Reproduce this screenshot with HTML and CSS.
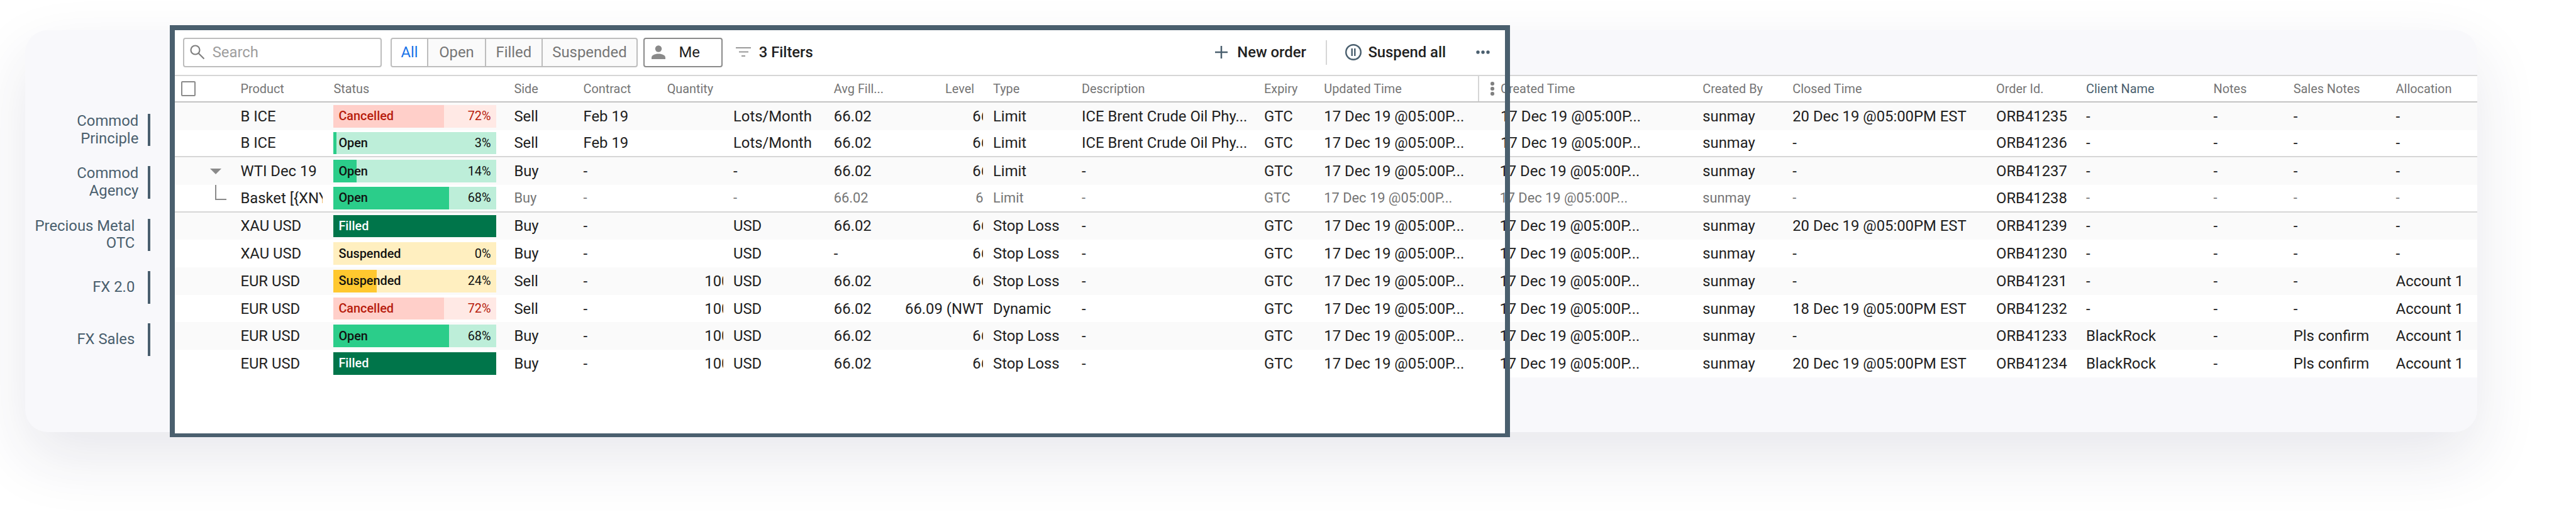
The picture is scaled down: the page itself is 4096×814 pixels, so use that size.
FILE: index.html
```html
<!DOCTYPE html>
<html lang="en">
  <head>
    <meta charset="UTF-8" />
    <meta name="viewport" content="width=device-width, initial-scale=1.0" />
    <title>Orders</title>
    <link rel="stylesheet" href="styles.css">
  </head>
  <body>
    <div class="card">
      <div class="focus-fill"></div>

      <!-- Desk list on the left -->
      <div class="desks">
        <div class="desk desk-wide">Commod<br>Principle</div>
        <div class="desk desk-wide">Commod<br>Agency</div>
        <div class="desk">Precious Metal<br>OTC</div>
        <div class="desk">FX 2.0</div>
        <div class="desk">FX Sales</div>
      </div>

      <div class="main">
        <!-- Toolbar -->
        <div class="toolbar">
          <div class="search">
            <svg class="search-icon" viewBox="0 0 24 24"><circle cx="8.500" cy="8.500" r="7"/><path d="M13.500 13.500l9 9"/></svg>
            <span>Search</span>
          </div>
          <div class="segments">
            <span class="seg seg-all">All</span>
            <span class="seg seg-open">Open</span>
            <span class="seg seg-filled">Filled</span>
            <span class="seg seg-susp">Suspended</span>
          </div>
          <div class="me">
            <svg class="me-icon" viewBox="0 0 24 24"><circle cx="12" cy="6.500" r="5.200"/><path d="M1 23v-2.500c0-3.500 5-6 11-6s11 2.500 11 6v2.500z"/></svg>
            <span>Me</span>
          </div>
          <div class="filters">
            <svg class="filter-icon" viewBox="0 0 24 24"><path d="M0 5h24M5 11.500h15M9 18h6"/></svg>
            <span>3 Filters</span>
          </div>
          <div class="actions">
            <svg class="plus-icon" viewBox="0 0 20 20"><path d="M10 0v20M0 10h20"/></svg>
            <span class="new-order">New order</span>
            <span class="divider"></span>
            <svg class="pause-icon" viewBox="0 0 26 26"><circle cx="13" cy="13" r="11.800"/><path d="M10.700 7v12M15.300 7v12"/></svg>
            <span class="suspend">Suspend all</span>
            <svg class="more-icon" viewBox="0 0 22 6"><circle cx="3" cy="3" r="2.700"/><circle cx="11" cy="3" r="2.700"/><circle cx="19" cy="3" r="2.700"/></svg>
          </div>
        </div>

        <!-- Table -->
        <div class="row head">
          <div class="sel"><span class="check"></span></div>
          <div>Product</div><div>Status</div><div>Side</div><div>Contract</div><div>Quantity</div><div></div><div>Avg Fill...</div>
          <div class="level-head">Level</div><div>Type</div><div>Description</div><div>Expiry</div>
          <div class="updated-head">Updated Time<span class="col-menu"><i></i><i></i><i></i></span></div>
          <div class="created">Created Time</div><div>Created By</div><div>Closed Time</div><div>Order Id.</div><div class="sorted">Client Name</div><div>Notes</div><div>Sales Notes</div><div>Allocation</div>
        </div>

        <div class="row">
          <div class="sel"></div><div>B ICE</div>
          <div class="bar cancelled"><b style="width:68%"></b><span>Cancelled</span><em>72%</em></div>
          <div>Sell</div><div>Feb 19</div><div class="qty"></div><div>Lots/Month</div><div>66.02</div><div class="level">66.02</div><div>Limit</div><div>ICE Brent Crude Oil Phy...</div><div>GTC</div><div>17 Dec 19 @05:00P...</div><div class="created">17 Dec 19 @05:00P...</div><div>sunmay</div><div>20 Dec 19 @05:00PM EST</div><div>ORB41235</div><div>-</div><div>-</div><div>-</div><div>-</div>
        </div>
        <div class="row sep">
          <div class="sel"></div><div>B ICE</div>
          <div class="bar open"><b style="width:1.6%"></b><span>Open</span><em>3%</em></div>
          <div>Sell</div><div>Feb 19</div><div class="qty"></div><div>Lots/Month</div><div>66.02</div><div class="level">66.02</div><div>Limit</div><div>ICE Brent Crude Oil Phy...</div><div>GTC</div><div>17 Dec 19 @05:00P...</div><div class="created">17 Dec 19 @05:00P...</div><div>sunmay</div><div>-</div><div>ORB41236</div><div>-</div><div>-</div><div>-</div><div>-</div>
        </div>
        <div class="row">
          <div class="sel"><span class="caret"></span></div><div>WTI Dec 19</div>
          <div class="bar open"><b style="width:14%"></b><span>Open</span><em>14%</em></div>
          <div>Buy</div><div>-</div><div class="qty"></div><div>-</div><div>66.02</div><div class="level">66.02</div><div>Limit</div><div>-</div><div>GTC</div><div>17 Dec 19 @05:00P...</div><div>17 Dec 19 @05:00P...</div><div>sunmay</div><div>-</div><div>ORB41237</div><div>-</div><div>-</div><div>-</div><div>-</div>
        </div>
        <div class="row child sep">
          <div class="sel"><span class="branch"></span></div><div class="keep clip">Basket [{XNYM...</div>
          <div class="bar open"><b style="width:71%"></b><span>Open</span><em>68%</em></div>
          <div>Buy</div><div>-</div><div class="qty"></div><div>-</div><div>66.02</div><div class="level">66.02</div><div>Limit</div><div>-</div><div>GTC</div><div>17 Dec 19 @05:00P...</div><div>17 Dec 19 @05:00P...</div><div>sunmay</div><div>-</div><div class="keep">ORB41238</div><div>-</div><div>-</div><div>-</div><div>-</div>
        </div>
        <div class="row">
          <div class="sel"></div><div>XAU USD</div>
          <div class="bar filled"><span>Filled</span></div>
          <div>Buy</div><div>-</div><div class="qty"></div><div>USD</div><div>66.02</div><div class="level">66.02</div><div>Stop Loss</div><div>-</div><div>GTC</div><div>17 Dec 19 @05:00P...</div><div>17 Dec 19 @05:00P...</div><div>sunmay</div><div>20 Dec 19 @05:00PM EST</div><div>ORB41239</div><div>-</div><div>-</div><div>-</div><div>-</div>
        </div>
        <div class="row">
          <div class="sel"></div><div>XAU USD</div>
          <div class="bar suspended"><span>Suspended</span><em>0%</em></div>
          <div>Buy</div><div>-</div><div class="qty"></div><div>USD</div><div>-</div><div class="level">66.02</div><div>Stop Loss</div><div>-</div><div>GTC</div><div>17 Dec 19 @05:00P...</div><div>17 Dec 19 @05:00P...</div><div>sunmay</div><div>-</div><div>ORB41230</div><div>-</div><div>-</div><div>-</div><div>-</div>
        </div>
        <div class="row">
          <div class="sel"></div><div>EUR USD</div>
          <div class="bar suspended"><b style="width:26.7%"></b><span>Suspended</span><em>24%</em></div>
          <div>Sell</div><div>-</div><div class="qty">1000</div><div>USD</div><div>66.02</div><div class="level">66.02</div><div>Stop Loss</div><div>-</div><div>GTC</div><div>17 Dec 19 @05:00P...</div><div>17 Dec 19 @05:00P...</div><div>sunmay</div><div>-</div><div>ORB41231</div><div>-</div><div>-</div><div>-</div><div>Account 1</div>
        </div>
        <div class="row">
          <div class="sel"></div><div>EUR USD</div>
          <div class="bar cancelled"><b style="width:68%"></b><span>Cancelled</span><em>72%</em></div>
          <div>Sell</div><div>-</div><div class="qty">1000</div><div>USD</div><div>66.02</div><div class="level level-long">66.09 (NWT)</div><div>Dynamic</div><div>-</div><div>GTC</div><div>17 Dec 19 @05:00P...</div><div>17 Dec 19 @05:00P...</div><div>sunmay</div><div>18 Dec 19 @05:00PM EST</div><div>ORB41232</div><div>-</div><div>-</div><div>-</div><div>Account 1</div>
        </div>
        <div class="row">
          <div class="sel"></div><div>EUR USD</div>
          <div class="bar open"><b style="width:71%"></b><span>Open</span><em>68%</em></div>
          <div>Buy</div><div>-</div><div class="qty">1000</div><div>USD</div><div>66.02</div><div class="level">66.02</div><div>Stop Loss</div><div>-</div><div>GTC</div><div>17 Dec 19 @05:00P...</div><div>17 Dec 19 @05:00P...</div><div>sunmay</div><div>-</div><div>ORB41233</div><div>BlackRock</div><div>-</div><div>Pls confirm</div><div>Account 1</div>
        </div>
        <div class="row">
          <div class="sel"></div><div>EUR USD</div>
          <div class="bar filled"><span>Filled</span></div>
          <div>Buy</div><div>-</div><div class="qty">1000</div><div>USD</div><div>66.02</div><div class="level">66.02</div><div>Stop Loss</div><div>-</div><div>GTC</div><div>17 Dec 19 @05:00P...</div><div>17 Dec 19 @05:00P...</div><div>sunmay</div><div>20 Dec 19 @05:00PM EST</div><div>ORB41234</div><div>BlackRock</div><div>-</div><div>Pls confirm</div><div>Account 1</div>
        </div>
      </div>

      <div class="focus-ring"></div>
    </div>
  </body>
</html>
```

FILE: styles.css
```css
/* Page and card */
html, body {
  height: 100%;
}

body {
  margin: 0;
  background-color: #fff;
  overflow: hidden;
  font-family: Roboto, sans-serif;
  color: #212121;
}

.card {
  position: relative;
  display: flex;
  box-sizing: border-box;
  width: 3899.3px;
  height: 639.6px;
  margin: 47.7px 0 0 39.7px;
  background-color: #f8f8fb;
  border-radius: 36px;
  box-shadow: 0 40px 100px rgba(40, 40, 80, 0.11);
}

/* White panel behind the table, dark outline in front of it */
.focus-fill,
.focus-ring {
  position: absolute;
  left: 230.4px;
  top: -7.9px;
  width: 2131.4px;
  height: 655.6px;
  box-sizing: border-box;
}

.focus-fill {
  background-color: #fff;
}

.focus-ring {
  z-index: 2;
  border: 8px solid #4a5f6e;
  border-bottom-width: 6px;
  pointer-events: none;
}

/* Desk list */
.desks {
  flex: none;
  width: 238.4px;
  padding-top: 133.1px;
  box-sizing: border-box;
  position: relative;
  z-index: 1;
}

.desk {
  display: flex;
  align-items: center;
  justify-content: flex-end;
  box-sizing: border-box;
  width: 199.6px;
  height: 51.6px;
  margin-bottom: 31.8px;
  padding-right: 21px;
  border-right: 4px solid #4a5f6e;
  text-align: right;
  font-size: 23.84px;
  line-height: 27.8px;
  color: #4a5f6e;
}

.desk-wide {
  padding-right: 15px;
}

/* Main column */
.main {
  position: relative;
  z-index: 1;
  flex: none;
  width: 3660.9px;
  font-size: 23.84px;
}

/* Toolbar */
.toolbar {
  display: flex;
  align-items: center;
  height: 71.5px;
  padding: 0 1570.2px 0 12.9px;
  box-sizing: border-box;
}

.search {
  display: flex;
  align-items: center;
  box-sizing: border-box;
  width: 315.8px;
  height: 47.7px;
  padding-left: 9px;
  border: 2px solid #bdbdbd;
  border-radius: 4px;
  color: #9e9e9e;
}

.search-icon {
  width: 24px;
  height: 24px;
  margin-right: 11.7px;
  fill: none;
  stroke: #808080;
  stroke-width: 2.2;
}

.segments {
  display: flex;
  height: 47.7px;
  margin-left: 13.9px;
  box-sizing: border-box;
  border: 2px solid #bdbdbd;
  border-radius: 4px;
  color: #757575;
  background-color: #fafafa;
}

.seg {
  display: flex;
  align-items: center;
  justify-content: center;
  box-sizing: border-box;
  border-left: 2px solid #bdbdbd;
}

.seg-all {
  width: 56.6px;
  border-left: 0;
  color: #1a73e8;
  background-color: #fff;
  border-radius: 3px 0 0 3px;
}

.seg-open {
  width: 91.4px;
}

.seg-filled {
  width: 90.4px;
}

.seg-susp {
  width: 150.9px;
}

.me {
  display: flex;
  align-items: center;
  box-sizing: border-box;
  width: 126.1px;
  height: 47.7px;
  margin-left: 8.9px;
  padding-left: 10px;
  border: 2px solid #8a8a8a;
  border-radius: 4px;
}

.me-icon {
  width: 24px;
  height: 24px;
  margin-right: 20.7px;
  fill: #8a8a8a;
}

.filters {
  display: flex;
  align-items: center;
  margin-left: 20.9px;
  font-weight: 500;
}

.filter-icon {
  width: 24px;
  height: 24px;
  margin-right: 12.9px;
  fill: none;
  stroke: #9a9a9a;
  stroke-width: 2.2;
}

.actions {
  display: flex;
  align-items: center;
  margin-left: auto;
  font-weight: 500;
}

.plus-icon {
  width: 20px;
  height: 20px;
  margin-right: 15px;
  fill: none;
  stroke: #4a5f6e;
  stroke-width: 2.5;
}

.divider {
  width: 2px;
  height: 39.7px;
  margin: 0 28.8px 0 30.8px;
  background-color: #d6d6d6;
}

.pause-icon {
  width: 26px;
  height: 26px;
  margin-right: 10.9px;
  fill: none;
  stroke: #4a5f6e;
  stroke-width: 2.4;
}

.more-icon {
  width: 22px;
  height: 6px;
  margin-left: 47.7px;
  fill: #4a5f6e;
}

/* Table rows */
.row {
  display: grid;
  grid-template-columns: 104.3px 148px 287px 110.2px 133.1px 105.3px 159.9px 113.2px 140px 141px 290px 95.3px 279.1px 322.8px 143px 323.8px 143px 202.6px 127.1px 162.9px 129.1px;
  align-items: center;
  box-sizing: border-box;
  height: 43.7px;
  white-space: nowrap;
  background-color: #fff;
}

.row:nth-child(odd) {
  background-color: #fafafa;
}

.row.head {
  border-top: 2px solid #d6d6d6;
  border-bottom: 2px solid #c4c4c4;
  font-size: 19.86px;
  color: #757575;
  background-color: #fff;
}

.sep {
  border-bottom: 2px solid #d6d6d6;
}

.sel {
  position: relative;
  height: 100%;
}

.check {
  position: absolute;
  left: 9.9px;
  top: 8px;
  box-sizing: border-box;
  width: 23px;
  height: 24px;
  border: 2.5px solid #8a8a8a;
  border-radius: 2px;
}

.caret {
  position: absolute;
  left: 56.4px;
  top: 18px;
  width: 0;
  height: 0;
  border-left: 9px solid transparent;
  border-right: 9px solid transparent;
  border-top: 9px solid #8a8a8a;
}

.branch {
  position: absolute;
  left: 63.6px;
  top: 0;
  width: 16px;
  height: 22px;
  border-left: 2px solid #8a8a8a;
  border-bottom: 2px solid #8a8a8a;
}

.clip {
  overflow: hidden;
  margin-right: 17px;
}

.qty {
  overflow: hidden;
  margin-right: 16px;
  padding-left: 59.6px;
}

.level {
  overflow: hidden;
  margin-right: 16px;
  padding-left: 107.3px;
}

.child .level {
  padding-left: 112.3px;
}

.row .level-long {
  padding-left: 0;
}

.level-head {
  text-align: right;
  padding-right: 30px;
}

.created {
  padding-left: 1.7px;
}

.updated-head {
  display: flex;
  align-items: center;
  height: 100%;
}

.col-menu {
  display: flex;
  flex-direction: column;
  align-items: center;
  justify-content: center;
  gap: 2.5px;
  box-sizing: border-box;
  height: 100%;
  width: 34px;
  margin-left: auto;
  padding-left: 9px;
  border-left: 2px solid #d6d6d6;
}

.col-menu i {
  width: 5.5px;
  height: 5.5px;
  border-radius: 50%;
  background-color: #808080;
}

.sorted {
  color: #4a5f6e;
}

/* Status bars */
.bar {
  position: relative;
  display: flex;
  align-items: center;
  justify-content: space-between;
  box-sizing: border-box;
  width: 258.2px;
  height: 35.8px;
  padding: 0 8px;
  font-size: 19.86px;
  font-weight: 500;
}

.bar b {
  position: absolute;
  left: 0;
  top: 0;
  height: 100%;
}

.bar span,
.bar em {
  position: relative;
  font-style: normal;
}

.bar em {
  font-weight: 400;
}

.cancelled {
  background-color: #ffe9e5;
  color: #b71c0c;
}

.cancelled b {
  background-color: #ffcfc9;
}

.open {
  background-color: #bdeed9;
  color: #111;
}

.open b {
  background-color: #2bcd8a;
}

.filled {
  background-color: #00754a;
  color: #fff;
}

.suspended {
  background-color: #ffefc0;
  color: #111;
}

.suspended b {
  background-color: #ffc82f;
}

/* Child row of an order: smaller, lighter text */
.child {
  font-size: 21.8px;
  color: #757575;
}

.child .keep {
  font-size: 23.84px;
  color: #212121;
}

.child .bar {
  font-size: 19.86px;
  color: #111;
}
```
